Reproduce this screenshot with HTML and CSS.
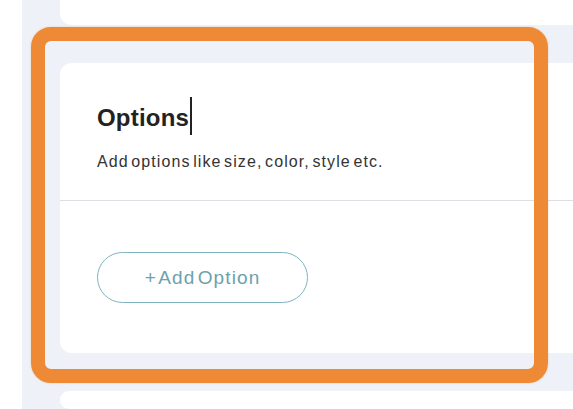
FILE: index.html
```html
<!DOCTYPE html>
<html lang="en">
<head>
<meta charset="utf-8">
<title>Options</title>
<link rel="stylesheet" href="styles.css">
</head>
<body>
<div class="page">
  <div class="card card-top"></div>
  <section class="card options">
    <header class="options-head">
      <h2 class="title">Options<span class="caret"></span></h2>
      <p class="subtitle">Add options like size, color, style etc.</p>
    </header>
    <div class="options-body">
      <button class="add-btn" type="button">+ Add Option</button>
    </div>
  </section>
  <div class="card card-next"></div>
</div>
<div class="highlight"></div>
</body>
</html>
```

FILE: styles.css
```css
html, body {
  margin: 0;
  padding: 0;
  background: #ffffff;
  height: 100%;
  overflow: hidden;
}

body {
  font-family: "Liberation Sans", Arial, sans-serif;
  position: relative;
}

.page {
  margin-left: 22px;
  height: 409px;
  background: #eef1f8;
  padding-left: 38px;
  display: flex;
  flex-direction: column;
  gap: 38px;
  box-sizing: border-box;
  overflow: hidden;
}

.card {
  background: #ffffff;
  border-radius: 12px 0 0 12px;
}

.card-top {
  height: 25px;
  border-radius: 0 0 0 12px;
  flex: none;
}

.options {
  height: 290px;
  flex: none;
  display: flex;
  flex-direction: column;
}

.options-head {
  padding: 38px 0 28px 37px;
  border-bottom: 1px solid #dcdfe3;
}

.title {
  margin: 0;
  font-size: 24px;
  line-height: 28px;
  font-weight: 700;
  color: #222222;
  letter-spacing: 0.2px;
  display: flex;
  align-items: center;
}

.caret {
  display: inline-block;
  width: 1.5px;
  height: 38px;
  background: #222;
  margin-left: 1px;
  margin-top: -4px;
}

.subtitle {
  margin: 17px 0 0;
  font-size: 16px;
  line-height: 20px;
  color: #333333;
  letter-spacing: 1.1px;
  word-spacing: -3px;
}

.options-body {
  padding: 51px 0 0 37px;
}

.add-btn {
  width: 211px;
  height: 51px;
  border: 1px solid #7fb3bf;
  border-radius: 26px;
  background: #ffffff;
  color: #6ca1ae;
  font-family: "Liberation Sans", Arial, sans-serif;
  font-size: 19px;
  letter-spacing: 1.1px;
  word-spacing: -4px;
  padding: 0;
}

.card-next {
  height: 18px;
  flex: none;
}

.highlight {
  position: absolute;
  left: 31px;
  top: 27px;
  width: 517px;
  height: 356px;
  box-sizing: border-box;
  border: 14px solid #ee8a36;
  border-radius: 20px;
  box-shadow: 0 0 2px rgba(238, 138, 54, 0.4);
}
```
